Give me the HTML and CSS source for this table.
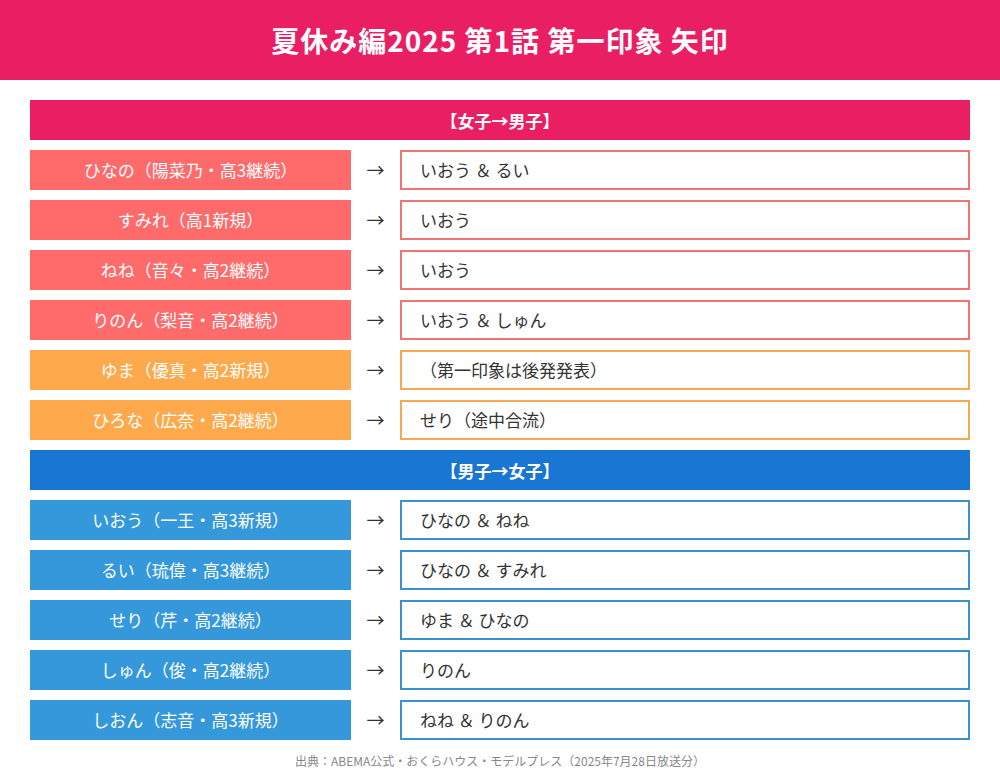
FILE: index.html
```html
<!DOCTYPE html>
<html lang="ja">
<head>
<meta charset="utf-8">
<title>夏休み編2025 第1話 第一印象 矢印</title>
<link rel="stylesheet" href="styles.css">
</head>
<body>
<header class="title-bar">
  <h1>夏休み編2025 第1話 第一印象 矢印</h1>
</header>
<main class="content">
  <div class="section-head pink">【女子→男子】</div>
  <div class="row coral"><div class="who">ひなの（陽菜乃・高3継続）</div><div class="arrow">→</div><div class="target">いおう ＆ るい</div></div>
  <div class="row coral"><div class="who">すみれ（高1新規）</div><div class="arrow">→</div><div class="target">いおう</div></div>
  <div class="row coral"><div class="who">ねね（音々・高2継続）</div><div class="arrow">→</div><div class="target">いおう</div></div>
  <div class="row coral"><div class="who">りのん（梨音・高2継続）</div><div class="arrow">→</div><div class="target">いおう ＆ しゅん</div></div>
  <div class="row orange"><div class="who">ゆま（優真・高2新規）</div><div class="arrow">→</div><div class="target">（第一印象は後発発表）</div></div>
  <div class="row orange"><div class="who">ひろな（広奈・高2継続）</div><div class="arrow">→</div><div class="target">せり（途中合流）</div></div>
  <div class="section-head blue-head">【男子→女子】</div>
  <div class="row blue"><div class="who">いおう（一王・高3新規）</div><div class="arrow">→</div><div class="target">ひなの ＆ ねね</div></div>
  <div class="row blue"><div class="who">るい（琉偉・高3継続）</div><div class="arrow">→</div><div class="target">ひなの ＆ すみれ</div></div>
  <div class="row blue"><div class="who">せり（芹・高2継続）</div><div class="arrow">→</div><div class="target">ゆま ＆ ひなの</div></div>
  <div class="row blue"><div class="who">しゅん（俊・高2継続）</div><div class="arrow">→</div><div class="target">りのん</div></div>
  <div class="row blue"><div class="who">しおん（志音・高3新規）</div><div class="arrow">→</div><div class="target">ねね ＆ りのん</div></div>
  <p class="source">出典：ABEMA公式・おくらハウス・モデルプレス（2025年7月28日放送分）</p>
</main>
</body>
</html>
```

FILE: styles.css
```css
* { box-sizing: border-box; }
html, body {
  margin: 0;
  padding: 0;
  background: #ffffff;
  font-family: "Noto Sans CJK JP", "Noto Sans", sans-serif;
}
.title-bar {
  background: #e91e63;
  height: 80px;
  display: flex;
  align-items: center;
  justify-content: center;
}
.title-bar h1 {
  margin: 0;
  color: #ffffff;
  font-size: 28px;
  font-weight: 700;
  letter-spacing: 1px;
}
.content {
  padding: 20px 30px 0;
  display: flex;
  flex-direction: column;
  gap: 10px;
}
.section-head {
  height: 40px;
  display: flex;
  align-items: center;
  justify-content: center;
  color: #ffffff;
  font-weight: 700;
  font-size: 17px;
}
.section-head.pink { background: #e91e63; }
.section-head.blue-head { background: #1976d2; }
.row {
  display: grid;
  grid-template-columns: 321px 49px 1fr;
  height: 40px;
}
.who {
  display: flex;
  align-items: center;
  justify-content: center;
  color: #ffffff;
  font-size: 17px;
  padding-bottom: 1px;
}
.arrow {
  display: flex;
  align-items: center;
  justify-content: center;
  color: #333333;
  font-size: 18px;
  padding-bottom: 2px;
}
.target {
  display: flex;
  align-items: center;
  padding-left: 18px;
  padding-bottom: 1px;
  border: 2px solid;
  color: #333333;
  font-size: 17px;
  background: #ffffff;
}
.coral .who { background: #ff6b6b; }
.coral .target { border-color: #f07474; }
.orange .who { background: #ffa94d; }
.orange .target { border-color: #f5a951; }
.blue .who { background: #3498db; }
.blue .target { border-color: #3b90d0; }
.source {
  margin: 2px 0 0;
  text-align: center;
  color: #888888;
  font-size: 12px;
}
```
